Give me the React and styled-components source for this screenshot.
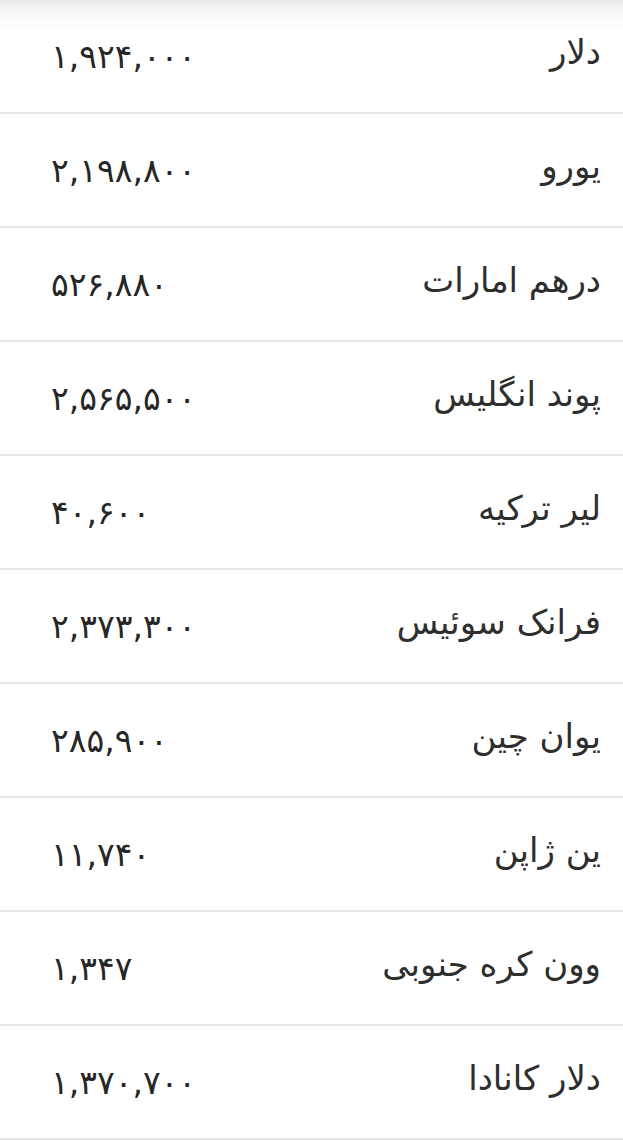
import React from "react";
import styled, { createGlobalStyle } from "styled-components";

const GlobalStyle = createGlobalStyle`
  html, body {
    margin: 0;
    padding: 0;
  }
  body {
    background: linear-gradient(#e9e9e9 0px, #f7f7f7 12px, #ffffff 30px) no-repeat;
    background-color: #ffffff;
    font-family: "DejaVu Sans", "Noto Sans", sans-serif;
    overflow: hidden;
  }
`;

const List = styled.div`
  direction: rtl;
  display: flex;
  flex-direction: column;
`;

const Row = styled.div`
  border-bottom: 2px solid #e6e6e6;
  display: flex;
  align-items: center;
  justify-content: space-between;
  padding: 2px 22px 2px 51px;
  height: 108px;
`;

const Name = styled.span`
  font-size: 34px;
  color: #2e2e2e;
  margin-bottom: 8px;
`;

const Price = styled.span`
  direction: ltr;
  unicode-bidi: isolate;
  font-size: 33px;
  color: #262626;
`;

const rates = [
  { name: "دلار", price: "۱,۹۲۴,۰۰۰" },
  { name: "یورو", price: "۲,۱۹۸,۸۰۰" },
  { name: "درهم امارات", price: "۵۲۶,۸۸۰" },
  { name: "پوند انگلیس", price: "۲,۵۶۵,۵۰۰" },
  { name: "لیر ترکیه", price: "۴۰,۶۰۰" },
  { name: "فرانک سوئیس", price: "۲,۳۷۳,۳۰۰" },
  { name: "یوان چین", price: "۲۸۵,۹۰۰" },
  { name: "ین ژاپن", price: "۱۱,۷۴۰" },
  { name: "وون کره جنوبی", price: "۱,۳۴۷" },
  { name: "دلار کانادا", price: "۱,۳۷۰,۷۰۰" },
];

const App = () => {
  return (
    <>
      <GlobalStyle />
      <List>
        {rates.map((rate) => (
          <Row key={rate.name}>
            <Name>{rate.name}</Name>
            <Price>{rate.price}</Price>
          </Row>
        ))}
      </List>
    </>
  );
};

export default App;
